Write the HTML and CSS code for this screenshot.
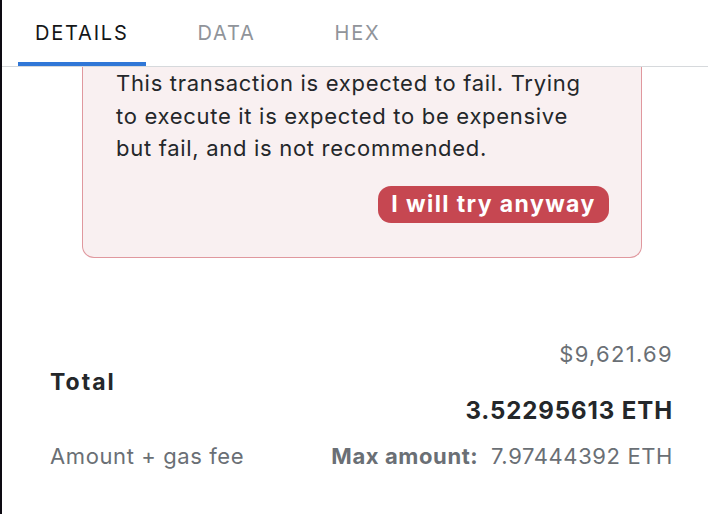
FILE: index.html
```html
<!DOCTYPE html>
<html>
<head>
<meta charset="utf-8">
<link rel="stylesheet" href="styles.css">
</head>
<body>
<div class="frame">
  <div class="edge"></div>
  <div class="main">
    <nav class="tabs">
      <div class="tab active">DETAILS</div>
      <div class="tab">DATA</div>
      <div class="tab">HEX</div>
    </nav>
    <div class="content">
      <div class="warning">
        <p class="warning-text">This transaction is expected to fail. Trying to execute it is expected to be expensive but fail, and is not recommended.</p>
        <div class="warning-actions">
          <button class="try-btn">I will try anyway</button>
        </div>
      </div>
      <div class="total">
        <div class="total-label">Total</div>
        <div class="total-values">
          <div class="fiat">$9,621.69</div>
          <div class="eth">3.52295613 ETH</div>
        </div>
        <div class="sub-label">Amount + gas fee</div>
        <div class="max"><span class="max-key">Max amount:</span> 7.97444392 ETH</div>
      </div>
    </div>
  </div>
</div>
</body>
</html>
```

FILE: styles.css
```css
* { box-sizing: border-box; }
html, body { margin: 0; padding: 0; background: #ffffff; }
body {
  font-family: Inter, "Noto Sans", sans-serif;
  color: #24272a;
  width: 708px;
  height: 514px;
  overflow: hidden;
}
.frame { display: flex; height: 514px; }
.edge { width: 2px; background: #0d0a12; flex: none; }
.main { flex: 1; display: flex; flex-direction: column; }
.tabs {
  display: flex;
  height: 67px;
  border-bottom: 1px solid #d6d9dc;
  padding-left: 16px;
  gap: 31px;
}
.tab {
  min-width: 100px;
  padding: 3px 17px 0;
  font-size: 20px;
  letter-spacing: 1.8px;
  color: #90949a;
  display: flex;
  align-items: center;
  justify-content: center;
  border-bottom: 4px solid transparent;
}
.tab.active {
  color: #141618;
  border-bottom-color: #3077d7;
}
.content { display: flex; flex-direction: column; }
.warning {
  margin-left: 80px;
  width: 560px;
  background: #f9f0f1;
  border: 1px solid #e0989e;
  border-top: none;
  border-radius: 0 0 12px 12px;
  padding: 0 32px 34px 33px;
}
.warning-text {
  margin: 0 20px 0 0;
  font-size: 22px;
  letter-spacing: 0.7px;
  line-height: 32.5px;
  color: #24272a;
}
.warning-actions { display: flex; justify-content: flex-end; margin-top: 21px; }
.try-btn {
  font-family: inherit;
  font-size: 23px;
  font-weight: 700;
  letter-spacing: 1.4px;
  color: #ffffff;
  background: #c64751;
  border: none;
  border-radius: 13px;
  height: 37px;
  width: 231px;
  padding: 0;
}
.total {
  display: grid;
  grid-template-columns: 1fr auto;
  margin: 79px 35px 0 48px;
  row-gap: 11px;
}
.total-label { font-size: 23px; font-weight: 700; letter-spacing: 2px; align-self: center; }
.total-values { display: flex; flex-direction: column; align-items: flex-end; gap: 23px; }
.fiat { font-size: 22px; line-height: 34px; color: #6a6f75; letter-spacing: 1.3px; }
.eth { font-size: 24px; line-height: 34px; font-weight: 700; letter-spacing: 0.9px; }
.sub-label { font-size: 22px; line-height: 34px; color: #6a6f75; letter-spacing: 0.6px; }
.max { font-size: 22px; line-height: 34px; color: #6a6f75; text-align: right; letter-spacing: 0.6px; }
.max-key { font-weight: 700; margin-right: 6px; }
```
